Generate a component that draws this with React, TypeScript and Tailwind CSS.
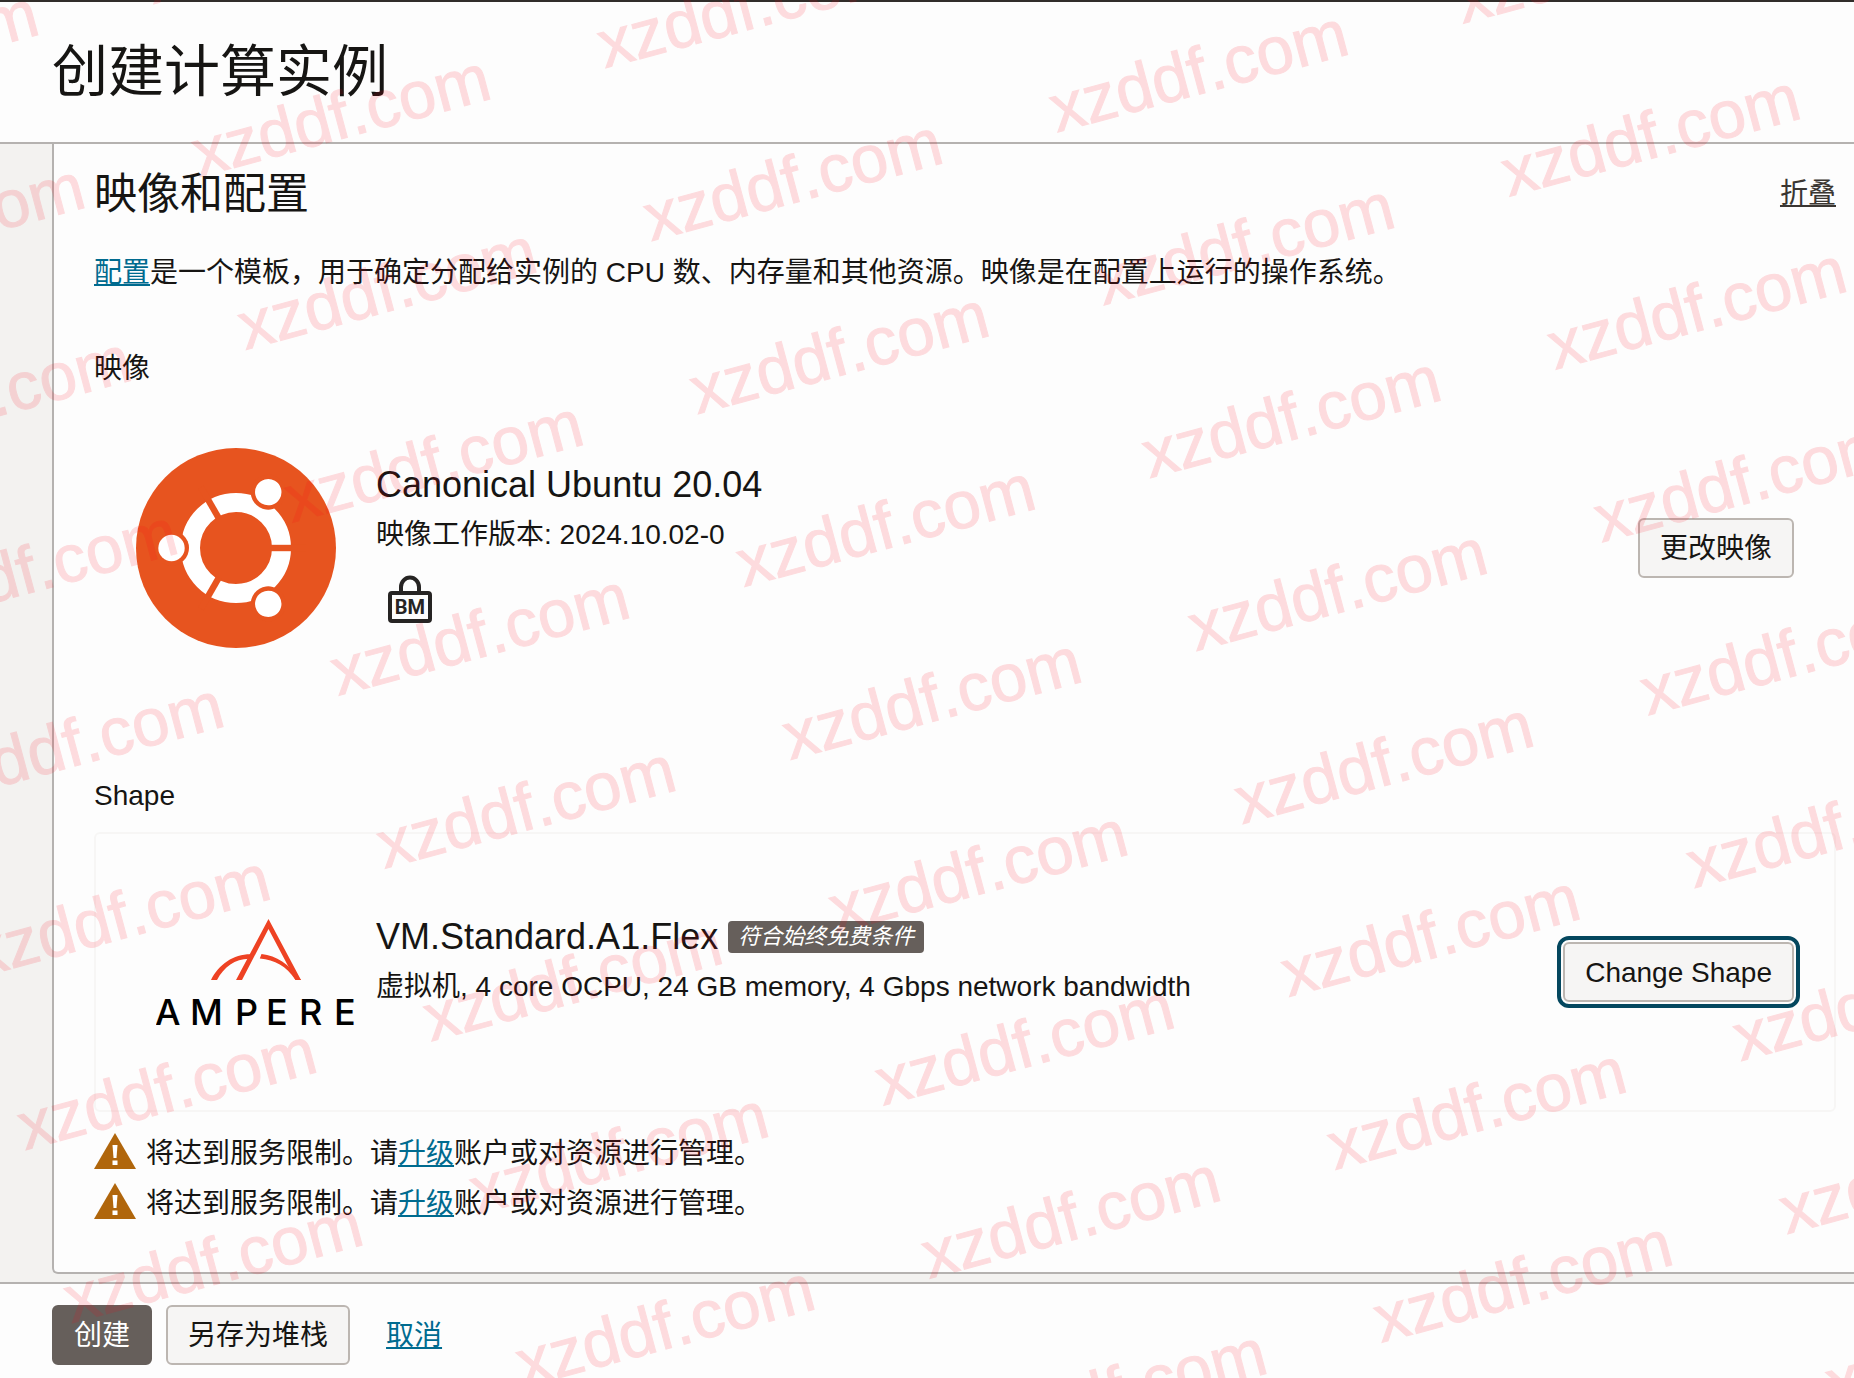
import type { ReactNode } from 'react';

const WATERMARK_ROWS = 12;
const WATERMARK_COLS = 6;

function TextLink({ children }: { children: ReactNode }) {
  return (
    <a href="#" className="text-[#006b8f] underline decoration-2 underline-offset-2">
      {children}
    </a>
  );
}

interface ActionButtonProps {
  children: ReactNode;
  variant?: 'default' | 'primary' | 'focused';
}

function ActionButton({ children, variant = 'default' }: ActionButtonProps) {
  const variants = {
    default: 'border-[#bcb6b1] bg-[#f6f5f4]',
    primary: 'border-[#665f5b] bg-[#665f5b] text-white',
    focused: 'border-[#bcb6b1] bg-[#f6f5f4] outline-4 outline-offset-2 outline-[#04475e]',
  };

  return (
    <button
      type="button"
      className={`h-15 shrink-0 rounded-md border-2 px-5 pt-0.5 leading-10 ${variants[variant]}`}
    >
      {children}
    </button>
  );
}

function UbuntuLogo() {
  const angles = [60, 180, 300];

  return (
    <svg viewBox="0 0 200 200" className="size-50" role="img" aria-label="Ubuntu">
      <circle cx="100" cy="100" r="100" fill="#e7541f" />
      <circle cx="100" cy="100" r="45.500" fill="none" stroke="#fff" strokeWidth="19" />
      {angles.map((angle) => (
        <g key={angle} transform={`rotate(${angle} 100 100)`}>
          <circle cx="164.500" cy="100" r="17.500" fill="#e7541f" />
          <circle cx="164.500" cy="100" r="13.200" fill="#fff" />
          <rect x="30" y="96.800" width="36" height="6.400" fill="#e7541f" />
        </g>
      ))}
    </svg>
  );
}

function AmpereLogo() {
  return (
    <svg viewBox="0 0 202 107" className="ml-5 h-[107px] w-[202px]" role="img" aria-label="Ampere">
      <g fill="#ee4223">
        <path d="M112.500 0L145 61H139.500L112.500 10L86 61H80Z" />
        <path d="M55 61C63 45 78 35 95 35.300L93 39.800C79 40 68 48 61 61Z" />
        <path d="M105.500 35C121 37 132 44.500 145 61H139.500C130 47 119 41 103.800 39.600Z" />
      </g>
      <text
        x="-1 34 79 110 143 178"
        y="106"
        fontSize="36"
        fontWeight="500"
        fontFamily="Inter, sans-serif"
        fill="#000"
      >
        AMPERE
      </text>
    </svg>
  );
}

function BareMetalIcon() {
  return (
    <svg viewBox="0 0 44 48" className="h-12 w-11" role="img" aria-label="BM">
      <path d="M13 18V12a9 9.500 0 0 1 18 0v6" fill="none" stroke="#262423" strokeWidth="4" />
      <rect x="2" y="18" width="40" height="28" rx="2" fill="none" stroke="#262423" strokeWidth="4" />
      <text
        x="22"
        y="39"
        textAnchor="middle"
        fontSize="20"
        fontWeight="700"
        fontFamily="Roboto, sans-serif"
        fill="#262423"
      >
        BM
      </text>
    </svg>
  );
}

function WarningIcon() {
  return (
    <svg viewBox="0 0 42 36" className="mb-1 h-9 w-[42px]" aria-hidden="true">
      <path d="M21 0L42 36H0Z" fill="#b0660c" />
      <path d="M18.500 12h5l-1 13h-3z" fill="#fff" />
      <rect x="18.500" y="27.500" width="5" height="4.500" fill="#fff" />
    </svg>
  );
}

function LimitWarning() {
  return (
    <li className="flex h-[50px] items-center gap-2.5">
      <WarningIcon />
      <p className="pt-0.5">
        将达到服务限制。请<TextLink>升级</TextLink>账户或对资源进行管理。
      </p>
    </li>
  );
}

function Watermark() {
  return (
    <div
      aria-hidden="true"
      className="pointer-events-none absolute inset-0 overflow-hidden text-[#ff0014] opacity-13"
    >
      <div className="size-0 origin-top-left -rotate-15">
        <div className="-mt-[18px] -ml-[278px] w-max text-[67px] leading-[75px] [-webkit-text-stroke:1px_#ff0014]">
          {Array.from({ length: WATERMARK_ROWS }, (_, row) => (
            <div key={row} className="flex h-[179px]">
              {Array.from({ length: WATERMARK_COLS }, (_, col) => (
                <span key={col} className="w-[420px]">
                  xzddf.com
                </span>
              ))}
            </div>
          ))}
        </div>
      </div>
    </div>
  );
}

export default function App() {
  return (
    <div className="relative flex min-h-screen flex-col bg-[#f3f2f0] font-['Liberation_Sans','Noto_Sans_CJK_SC',sans-serif] text-[28px] leading-10 text-[#161513]">
      <header className="border-t-2 border-b-2 border-t-[#312d2a] border-b-[#b5b2b0] bg-[#fdfdfd] px-13 py-8">
        <h1 className="text-[56px] leading-[76px]">创建计算实例</h1>
      </header>

      <main className="flex-1 pb-2 pl-13">
        <section className="rounded-bl-md border-b-2 border-l-2 border-[#b5b2b0] bg-[#fdfdfd] pt-[25px] pr-[18px] pb-11 pl-10">
          <div className="flex items-center justify-between">
            <h2 className="text-[43px] leading-[50px]">映像和配置</h2>
            <button
              type="button"
              className="text-[#3a3632] underline decoration-2 underline-offset-2"
            >
              折叠
            </button>
          </div>
          <p className="mt-[34px]">
            <TextLink>配置</TextLink>
            是一个模板，用于确定分配给实例的 CPU 数、内存量和其他资源。映像是在配置上运行的操作系统。
          </p>

          <h3 className="mt-14">映像</h3>
          <div className="mt-[19px] flex h-[280px] items-center rounded-md border-2 border-transparent px-10">
            <div className="w-60 shrink-0">
              <UbuntuLogo />
            </div>
            <div className="flex-1 pt-1">
              <h4 className="text-4xl leading-[50px]">Canonical Ubuntu 20.04</h4>
              <p className="leading-[50px]">映像工作版本: 2024.10.02-0</p>
              <div className="h-20 pt-[15px] pl-3">
                <BareMetalIcon />
              </div>
            </div>
            <ActionButton>更改映像</ActionButton>
          </div>

          <h3 className="mt-[88px]">Shape</h3>
          <div className="mt-4 flex h-[280px] items-center rounded-md border-2 border-[#f7f6f5] px-10">
            <div className="w-60 shrink-0">
              <AmpereLogo />
            </div>
            <div className="flex-1 pb-5">
              <div className="flex items-center gap-2.5">
                <h4 className="text-4xl leading-[50px]">VM.Standard.A1.Flex</h4>
                <span className="rounded-sm bg-[#665f5b] px-2.5 text-[22px] leading-8 text-white italic">
                  符合始终免费条件
                </span>
              </div>
              <p className="leading-[50px]">
                虚拟机, 4 core OCPU, 24 GB memory, 4 Gbps network bandwidth
              </p>
            </div>
            <ActionButton variant="focused">Change Shape</ActionButton>
          </div>

          <ul className="mt-4">
            <LimitWarning />
            <LimitWarning />
          </ul>
        </section>
      </main>

      <footer className="flex items-center border-t-2 border-[#b5b2b0] bg-[#fdfdfd] px-13 pt-[21px] pb-[13px]">
        <ActionButton variant="primary">创建</ActionButton>
        <div className="ml-3.5">
          <ActionButton>另存为堆栈</ActionButton>
        </div>
        <div className="ml-9 pt-0.5">
          <TextLink>取消</TextLink>
        </div>
      </footer>

      <Watermark />
    </div>
  );
}
